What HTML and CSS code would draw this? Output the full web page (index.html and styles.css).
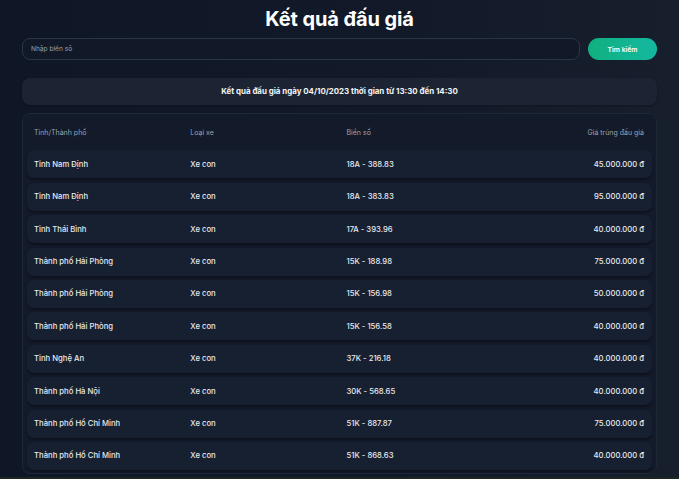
FILE: index.html
```html
<!DOCTYPE html>
<html lang="vi">
<head>
<meta charset="utf-8">
<title>Kết quả đấu giá</title>
<link rel="stylesheet" href="styles.css">
</head>
<body>
<div class="page">
  <h1 class="title">Kết quả đấu giá</h1>
  <div class="search">
    <input class="search-input" type="text" placeholder="Nhập biển số">
    <button class="search-btn">Tìm kiếm</button>
  </div>
  <div class="info">Kết quả đấu giá ngày 04/10/2023 thời gian từ 13:30 đến 14:30</div>
  <div class="card">
    <div class="row head">
      <div class="cell">Tỉnh/Thành phố</div>
      <div class="cell">Loại xe</div>
      <div class="cell">Biển số</div>
      <div class="cell right">Giá trúng đấu giá</div>
    </div>
    <div class="row item"><div class="cell">Tỉnh Nam Định</div><div class="cell">Xe con</div><div class="cell">18A - 388.83</div><div class="cell right">45.000.000 đ</div></div>
    <div class="row item"><div class="cell">Tỉnh Nam Định</div><div class="cell">Xe con</div><div class="cell">18A - 383.83</div><div class="cell right">95.000.000 đ</div></div>
    <div class="row item"><div class="cell">Tỉnh Thái Bình</div><div class="cell">Xe con</div><div class="cell">17A - 393.96</div><div class="cell right">40.000.000 đ</div></div>
    <div class="row item"><div class="cell">Thành phố Hải Phòng</div><div class="cell">Xe con</div><div class="cell">15K - 188.98</div><div class="cell right">75.000.000 đ</div></div>
    <div class="row item"><div class="cell">Thành phố Hải Phòng</div><div class="cell">Xe con</div><div class="cell">15K - 156.98</div><div class="cell right">50.000.000 đ</div></div>
    <div class="row item"><div class="cell">Thành phố Hải Phòng</div><div class="cell">Xe con</div><div class="cell">15K - 156.58</div><div class="cell right">40.000.000 đ</div></div>
    <div class="row item"><div class="cell">Tỉnh Nghệ An</div><div class="cell">Xe con</div><div class="cell">37K - 216.18</div><div class="cell right">40.000.000 đ</div></div>
    <div class="row item"><div class="cell">Thành phố Hà Nội</div><div class="cell">Xe con</div><div class="cell">30K - 568.65</div><div class="cell right">40.000.000 đ</div></div>
    <div class="row item"><div class="cell">Thành phố Hồ Chí Minh</div><div class="cell">Xe con</div><div class="cell">51K - 887.87</div><div class="cell right">75.000.000 đ</div></div>
    <div class="row item"><div class="cell">Thành phố Hồ Chí Minh</div><div class="cell">Xe con</div><div class="cell">51K - 868.63</div><div class="cell right">40.000.000 đ</div></div>
  </div>
</div>
</body>
</html>
```

FILE: styles.css
```css
html {
  background: #1b2721;
}
body {
  margin: 0;
  font-family: Inter, "Noto Sans", sans-serif;
  color: #e5e7eb;
}
.page {
  height: 477px;
  box-sizing: border-box;
  background: linear-gradient(90deg, #0f1625 0%, #121a29 60%, #171e2c 100%);
  padding: 5px 22px 0 22px;
  overflow: hidden;
}
.title {
  margin: 0;
  height: 28px;
  line-height: 28px;
  text-align: center;
  font-size: 20px;
  font-weight: 700;
  color: #ffffff;
  letter-spacing: -0.1px;
}
.search {
  display: flex;
  gap: 8px;
  margin-top: 5px;
  height: 22px;
}
.search-input {
  flex: 1;
  box-sizing: border-box;
  height: 22px;
  border: 1px solid #2b3545;
  border-radius: 8px;
  background: #111827;
  padding: 0 8px;
  font-family: inherit;
  font-size: 6.6px;
  color: #e5e7eb;
  outline: none;
}
.search-input::placeholder {
  color: #9ca3af;
}
.search-btn {
  width: 69px;
  height: 22px;
  border: none;
  border-radius: 11px;
  background: linear-gradient(90deg, #10b07f, #14b8a0);
  color: #ffffff;
  font-family: inherit;
  font-size: 6.8px;
  font-weight: 600;
  padding: 0;
}
.info {
  margin-top: 18px;
  height: 27px;
  line-height: 27px;
  border-radius: 8px;
  background: #1c2433;
  text-align: center;
  font-size: 7.9px;
  font-weight: 700;
  color: #f3f4f6;
  box-shadow: 0 1px 2px rgba(0,0,0,0.25);
}
.card {
  margin-top: 8px;
  border: 1px solid #1e2736;
  border-radius: 8px;
  background: #131a2a;
  padding: 4px 4px 3px 4px;
  display: flex;
  flex-direction: column;
  gap: 4.4px;
}
.row {
  display: grid;
  grid-template-columns: repeat(4, 1fr);
  height: 28px;
  align-items: center;
  border-radius: 7px;
}
.item {
  background: #172030;
  box-shadow: 0 1.5px 2px rgba(0,0,0,0.3);
  font-size: 7.7px;
  font-weight: 500;
  color: #e8eaee;
}
.head {
  font-size: 7px;
  color: #9ca3af;
}
.cell {
  padding-left: 7px;
  white-space: nowrap;
}
.cell.right {
  text-align: right;
  padding-left: 0;
  padding-right: 8px;
}
```
